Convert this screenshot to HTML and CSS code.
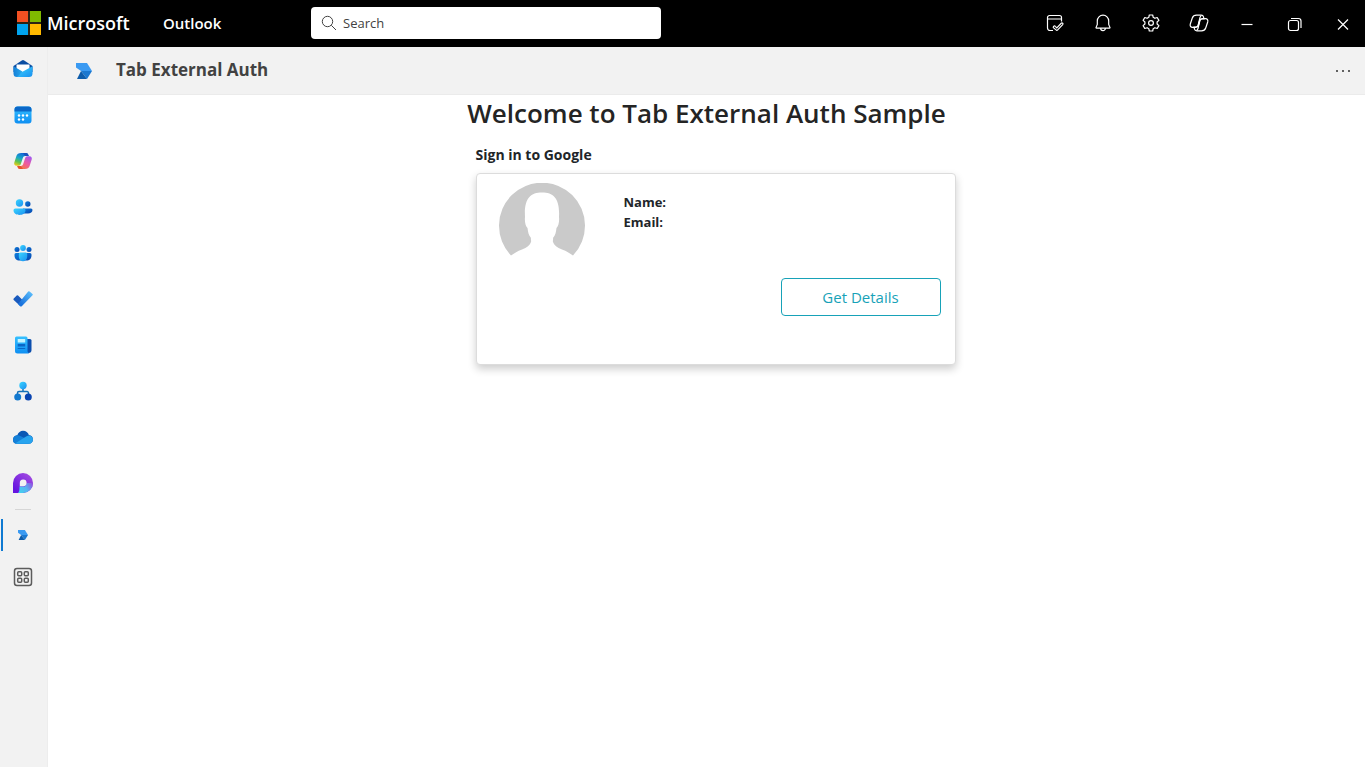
FILE: index.html
```html
<!DOCTYPE html>
<html lang="en">
<head>
<meta charset="utf-8">
<title>Tab External Auth - Outlook</title>
<link rel="stylesheet" href="styles.css">
</head>
<body>
<svg width="0" height="0" class="defs" aria-hidden="true">
  <defs>
    <linearGradient id="sky" x1="0" y1="0" x2="1" y2="1"><stop offset="0" stop-color="#3bd5ff"/><stop offset="1" stop-color="#1a90f0"/></linearGradient>
    <linearGradient id="deep" x1="0" y1="0" x2="1" y2="1"><stop offset="0" stop-color="#0f7fdc"/><stop offset="1" stop-color="#0544ae"/></linearGradient>
    <linearGradient id="day" x1="0" y1="0" x2="0" y2="1"><stop offset="0" stop-color="#35c0ff"/><stop offset="1" stop-color="#0f8ff2"/></linearGradient>
    <linearGradient id="env" x1="0" y1="0" x2="1" y2="0"><stop offset="0" stop-color="#1480d8"/><stop offset="1" stop-color="#35bdf5"/></linearGradient>
    <linearGradient id="tick" x1="0" y1="1" x2="1" y2="0"><stop offset="0.2" stop-color="#1a73dd"/><stop offset="1" stop-color="#62c5ff"/></linearGradient>
    <linearGradient id="cool" gradientUnits="userSpaceOnUse" x1="9" y1="2" x2="4" y2="15"><stop offset="0" stop-color="#1468d8"/><stop offset="0.4" stop-color="#18a8c8"/><stop offset="0.7" stop-color="#62c44c"/><stop offset="1" stop-color="#f5cc18"/></linearGradient>
    <linearGradient id="warm" gradientUnits="userSpaceOnUse" x1="16" y1="5" x2="8" y2="18"><stop offset="0" stop-color="#a357ee"/><stop offset="0.5" stop-color="#ee5aa0"/><stop offset="1" stop-color="#f47a3c"/></linearGradient>
    <linearGradient id="loop" x1="0.9" y1="0.1" x2="0.2" y2="0.9"><stop offset="0" stop-color="#a24be0"/><stop offset="1" stop-color="#6614e0"/></linearGradient>
    <linearGradient id="loopTail" gradientUnits="userSpaceOnUse" x1="6" y1="18" x2="19" y2="10"><stop offset="0" stop-color="#43d0f0"/><stop offset="0.5" stop-color="#58b4f0"/><stop offset="1" stop-color="#9250e0"/></linearGradient>
    <symbol id="app" viewBox="0 0 16 16">
      <path d="M0 0h11l5 8H5L0 4.500z" fill="#3a9af2"/><path d="M5 8h11l-5 8z" fill="#1b78d0"/><path d="M5 8l6 8H1z" fill="#0d5cab"/>
    </symbol>
  </defs>
</svg>

<header class="topbar">
  <a class="brand" href="#">
    <svg class="brand-mark" viewBox="0 0 24 24" aria-hidden="true"><path d="M0 0h24v24H0z" fill="#2c2413"/><path d="M0 0h11v11H0z" fill="#f25022"/><path d="M13 0h11v11H13z" fill="#7fba00"/><path d="M0 13h11v11H0z" fill="#00a4ef"/><path d="M13 13h11v11H13z" fill="#ffb900"/></svg>
    <span class="brand-name">Microsoft</span>
  </a>
  <a class="product" href="#">Outlook</a>
  <label class="search">
    <svg class="search-icon" viewBox="0 0 16 16" aria-hidden="true"><circle cx="6.500" cy="6.500" r="5.200"/><path d="M10.300 10.300L15 15"/></svg>
    <input type="search" placeholder="Search" aria-label="Search">
  </label>
  <div class="actions">
    <button type="button" aria-label="My Day"><svg viewBox="0 0 20 20"><path d="M8 17.500H5A2.500 2.500 0 0 1 2.500 15V4.500a2 2 0 0 1 2-2h10a2 2 0 0 1 2 2v4M2.500 6h14M8.600 13.300c.6-.6 1.200-.6 1.700 0l1.500 1.500 4.400-4.500c1-.9 2.400.4 1.500 1.400l-5 5.200c-.5.500-1.200.5-1.700 0L8.600 14.900c-.5-.5-.5-1.100 0-1.600z"/></svg></button>
    <button type="button" aria-label="Notifications"><svg viewBox="0 0 20 20"><path d="M10 2.200a5.700 5.700 0 0 0-5.700 5.700v3.600L3 14.600c-.1.300.1.500.4.500h13.200c.3 0 .5-.2.400-.5l-1.300-3.100V7.900A5.700 5.700 0 0 0 10 2.200zM7.600 15.200a2.400 2.400 0 0 0 4.800 0"/></svg></button>
    <button type="button" aria-label="Settings"><svg viewBox="0 0 20 20"><path d="M8.300 2h3.400l.5 2.300 1.700 1 2.300-.8 1.700 2.900-1.800 1.600v2l1.800 1.600-1.700 2.900-2.300-.8-1.700 1-.5 2.300H8.300l-.5-2.300-1.700-1-2.300.8-1.700-2.900L3.900 11V9L2.100 7.400l1.700-2.900 2.300.8 1.700-1z" stroke-linejoin="round"/><circle cx="10" cy="10" r="2.400"/></svg></button>
    <button type="button" aria-label="Copilot"><svg viewBox="0 0 20 20"><path id="half" d="M7.500 2.200H12.200c1.300 0 2 .6 2.300 1.700L15 6H13c-1.300 0-2 .7-2.400 2L9.200 12.400c-.4 1.300-1.200 1.900-2.600 1.900H3.500c-1.900 0-2.700-1.500-2.200-3.300L3.300 5C4 3 5.300 2.200 7.500 2.200z"/><use href="#half" transform="rotate(180 10 10)"/><path d="M12.500 2.500c-1 .3-1.200 1-1.500 2L9.200 12M7.500 17.500c1-.3 1.200-1 1.500-2L10.800 8"/></svg></button>
    <button type="button" class="window" aria-label="Minimize"><svg viewBox="0 0 20 20"><path d="M4.500 10.500h11"/></svg></button>
    <button type="button" class="window" aria-label="Restore"><svg viewBox="0 0 20 20"><rect x="3.500" y="6.500" width="10" height="10" rx="2"/><path d="M6 4.500h7.500A2.500 2.500 0 0 1 16 7v7"/></svg></button>
    <button type="button" class="window" aria-label="Close"><svg viewBox="0 0 20 20"><path d="M5 5.500l10 10M15 5.500l-10 10"/></svg></button>
  </div>
</header>

<div class="shell">
  <nav class="rail" aria-label="Apps">
    <a href="#" aria-label="Mail"><svg viewBox="0 0 20 20"><path d="M.5 7L8.800 1.500a2 2 0 0 1 2.400 0L19.500 7v6H.5z" fill="#0b4ea3"/><path d="M3.500 5.500h13V14h-13z" fill="#fff"/><path d="M.5 7.200l8.500 5L14 18H4a3.500 3.500 0 0 1-3.500-3.500z" fill="url(#env)"/><path d="M19.500 7.200v7.300A3.500 3.500 0 0 1 16 18H4c2-1 3-3.500 5-5z" fill="url(#sky)"/></svg></a>
    <a href="#" aria-label="Calendar"><svg viewBox="0 0 20 20"><rect x="1.500" y="1.500" width="17" height="17" rx="3" fill="url(#day)"/><path d="M1.500 6.500v-2a3 3 0 0 1 3-3h11a3 3 0 0 1 3 3v2z" fill="#0b68c8"/><g fill="#fff"><circle cx="6" cy="10.500" r="1.200"/><circle cx="10" cy="10.500" r="1.200"/><circle cx="14" cy="10.500" r="1.200"/><circle cx="6" cy="14.500" r="1.200"/><circle cx="10" cy="14.500" r="1.200"/></g></svg></a>
    <a href="#" aria-label="Copilot"><svg viewBox="0 0 20 20"><path d="M8.200 2H13c1.300 0 2 .8 2.400 2l.3 1h-3.500c-1.300 0-2 .7-2.400 2L8 12.500c-.5 1.500-1.200 2.200-2.500 2.200h-2c-1.900 0-2.700-1.500-2.200-3.300L3.400 5C4 3 5.500 2 8.200 2z" fill="url(#cool)"/><path d="M11.800 18H7c-1.300 0-2-.8-2.400-2l-.3-1h3.500c1.300 0 2-.7 2.400-2L12 7.500c.5-1.500 1.200-2.200 2.500-2.200h2c1.900 0 2.700 1.500 2.200 3.300L16.600 15c-.6 2-2.100 3-4.800 3z" fill="url(#warm)"/><path d="M10 2h3c1.300 0 2 .8 2.400 2l.3 1h-3.500z" fill="#1a52bd"/><path d="M10 18H7c-1.300 0-2-.8-2.400-2l-.3-1h3.500z" fill="#e6532e"/></svg></a>
    <a href="#" aria-label="People"><svg viewBox="0 0 20 20"><circle cx="14.800" cy="7" r="2.700" fill="url(#deep)"/><path d="M10 11.500h8a1.500 1.500 0 0 1 1.500 1.500c0 2.300-2 3.500-4.500 3.500h-5z" fill="url(#deep)"/><circle cx="6.500" cy="6" r="3.700" fill="url(#sky)"/><path d="M2.300 11.500h8.400a1.800 1.800 0 0 1 1.800 1.800c0 3-2.700 4.700-6 4.700s-6-1.700-6-4.700a1.800 1.800 0 0 1 1.800-1.800z" fill="url(#sky)"/></svg></a>
    <a href="#" aria-label="Groups"><svg viewBox="0 0 20 20"><circle cx="4" cy="6.500" r="2.500" fill="url(#deep)"/><circle cx="16" cy="6.500" r="2.500" fill="url(#deep)"/><path d="M3 10h14a1.500 1.500 0 0 1 1.500 1.500v1c0 3-2 5-5 5h-7c-3 0-5-2-5-5v-1A1.500 1.500 0 0 1 3 10z" fill="url(#deep)"/><circle cx="10" cy="5" r="2.900" fill="url(#sky)"/><path d="M7.300 9.500h5.400a1.500 1.500 0 0 1 1.500 1.500v3a4.200 4.200 0 0 1-8.400 0v-3a1.500 1.500 0 0 1 1.500-1.500z" fill="url(#sky)"/></svg></a>
    <a href="#" aria-label="To Do"><svg viewBox="0 0 20 20"><path d="M.7 9.600l3-3a1 1 0 0 1 1.400 0l5.900 5.900-3.200 3.700a1 1 0 0 1-1.400 0L.7 11a1 1 0 0 1 0-1.400z" fill="#195abd"/><path d="M5 15L15.200 2.500a1 1 0 0 1 1.400 0l2.900 2.400a1 1 0 0 1 0 1.400L9 17a1.500 1.500 0 0 1-2.200 0z" fill="url(#tick)"/></svg></a>
    <a href="#" aria-label="News"><svg viewBox="0 0 20 20"><path d="M12 4h5a1.500 1.500 0 0 1 1.500 1.500v9.500a3 3 0 0 1-3 3H12z" fill="#0c4fae"/><path d="M3.500 1.500h9.500A1.500 1.500 0 0 1 14.500 3v13.500l1.500 2H4.500A2.500 2.500 0 0 1 2 16V3a1.500 1.500 0 0 1 1.500-1.500z" fill="url(#day)"/><path d="M4.700 4h7.500v3.500H4.700z" fill="#c5f4ff"/><path d="M4.700 9h7.500v2.500H4.700zM4.700 13h7.500v1H4.700z" fill="#0b67c6"/></svg></a>
    <a href="#" aria-label="Org Explorer"><svg viewBox="0 0 20 20"><path d="M10 6v4M4.500 14v-2A1.500 1.500 0 0 1 6 10.500h8a1.500 1.500 0 0 1 1.500 1.500v2" fill="none" stroke="#1571b8" stroke-width="1.500"/><circle cx="10" cy="4.500" r="3.700" fill="url(#sky)"/><circle cx="4.700" cy="16" r="3.500" fill="#1379cf"/><circle cx="15.300" cy="16" r="3.500" fill="#0944b1"/></svg></a>
    <a href="#" aria-label="OneDrive"><svg viewBox="0 0 20 20"><path d="M4 16.700a4 4 0 0 1-4-4c0-2.500 1.800-4.200 4.300-4.400C5.300 5.200 7.500 3.700 10 3.700c3 0 5 1.800 5.900 4.400 2.400.2 4.100 2 4.100 4.300 0 2.500-1.800 4.300-4.200 4.300z" fill="#0a58b5"/><path d="M4 16.700a4 4 0 0 1-4-4c0-3.200 3.500-5.300 6.700-3.900L18 14l-3 2.700z" fill="#1480d8"/><path d="M2.400 16.300L13.500 9.200c3.300-2 6.500.4 6.500 3.400a4.100 4.100 0 0 1-4.200 4.100H4c-.6 0-1.100-.1-1.600-.4z" fill="#28a4ee"/></svg></a>
    <a href="#" aria-label="Loop"><svg viewBox="0 0 20 20"><path d="M0 20V10A10 10 0 1 1 10 20z" fill="url(#loop)"/><path d="M5 20c1.300-1 1.500-3 1.500-6.500H12l2-3.500 6 0A10 10 0 0 1 10 20z" fill="url(#loopTail)"/><path d="M6.800 13.300V10a3.400 3.400 0 1 1 3.400 3.300z" fill="#f2f2f2"/></svg></a>
    <hr>
    <a href="#" class="current" aria-label="Tab External Auth" aria-current="page"><svg viewBox="0 0 16 16"><use href="#app"/></svg></a>
    <a href="#" class="more" aria-label="More apps"><svg viewBox="0 0 20 20" fill="none" stroke="#5c5c5c" stroke-width="1.500"><rect x="1.500" y="1.500" width="17" height="17" rx="2.500"/><rect x="4.700" y="4.700" width="4" height="4" rx="1"/><rect x="11.300" y="4.700" width="4" height="4" rx="1"/><rect x="4.700" y="11.300" width="4" height="4" rx="1"/><rect x="11.300" y="11.300" width="4" height="4" rx="1"/></svg></a>
  </nav>

  <div class="workspace">
    <div class="app-header">
      <svg class="app-logo" viewBox="0 0 16 16" aria-hidden="true"><use href="#app"/></svg>
      <h2 class="app-title">Tab External Auth</h2>
      <button type="button" class="overflow" aria-label="More options"><svg viewBox="0 0 16 16"><path d="M1 7h2v2H1zM7 7h2v2H7zM13 7h2v2h-2z"/></svg></button>
    </div>
    <main class="content">
      <h1>Welcome to Tab External Auth Sample</h1>
      <section class="sign-in">
        <h3>Sign in to Google</h3>
        <div class="card">
          <svg class="avatar" viewBox="0 0 86 73" role="img" aria-label="Profile picture"><path d="M12 72.500A43 43 0 1 1 74 72.500C70 70 68 68 63 66.500c-5-2-8-4-9-7.500-.5-2 .5-2 0-4 2.500-3 3-6 3.500-10 2-2 3-7 2.500-11C61 16 55 9.500 43 9.500S25 16 26 34c-.5 4 .5 9 2.500 11 .5 4 1 7 3.500 10-.5 2 .5 2 0 4-1 3.500-4 5.500-9 7.500-5 1.500-7 3.500-11 6z" fill="#cacaca"/></svg>
          <div class="details">
            <dl>
              <dt>Name:</dt>
              <dt>Email:</dt>
            </dl>
            <button type="button" class="get-details">Get Details</button>
          </div>
        </div>
      </section>
    </main>
  </div>
</div>
</body>
</html>
```

FILE: styles.css
```css
* {
  box-sizing: border-box;
}

body {
  margin: 0;
  min-height: 100vh;
  display: flex;
  flex-direction: column;
  background: #fff;
  color: #212529;
  font-family: "Open Sans", "Noto Sans", sans-serif;
}

a {
  color: inherit;
  text-decoration: none;
}

button {
  font: inherit;
  cursor: pointer;
}

.defs {
  position: absolute;
}

.topbar {
  display: flex;
  align-items: center;
  height: 47px;
  padding: 0 0 2px 17px;
  background: #000;
  color: #fff;
}

.brand {
  display: flex;
  align-items: center;
  gap: 6px;
  width: 146px;
}

.brand-mark {
  width: 24px;
  height: 24px;
}

.brand-name {
  font-size: 18px;
  font-weight: 600;
  line-height: 24px;
}

.product {
  width: 148px;
  font-size: 15px;
  font-weight: 600;
}

.search {
  display: flex;
  align-items: center;
  gap: 6px;
  width: 350px;
  height: 32px;
  padding: 0 10px;
  border-radius: 4px;
  background: #fff;
}

.search-icon {
  width: 16px;
  height: 16px;
  fill: none;
  stroke: #424242;
}

.search input {
  flex: 1;
  min-width: 0;
  padding: 0;
  border: 0;
  outline: 0;
  background: none;
  font: 13px "Open Sans", "Noto Sans", sans-serif;
}

.search input::placeholder {
  color: #424242;
}

.actions {
  display: flex;
  margin: 0 -2px 0 auto;
}

.actions button {
  display: grid;
  place-items: center;
  width: 48px;
  height: 45px;
  padding: 0;
  border: 0;
  background: none;
}

.actions .window {
  padding-top: 3px;
}

.actions svg {
  width: 20px;
  height: 20px;
  fill: none;
  stroke: #fff;
  stroke-width: 1.2;
}

.shell {
  flex: 1;
  display: flex;
}

.rail {
  display: flex;
  flex-direction: column;
  gap: 2px;
  width: 48px;
  border-right: 1px solid #ededed;
  background: #f2f2f2;
}

.rail a {
  display: grid;
  place-items: center;
  height: 44px;
  padding-right: 1px;
}

.rail svg {
  width: 20px;
  height: 20px;
}

.rail hr {
  width: 16px;
  margin: 2px 0 7px 15px;
  border: 0;
  border-top: 1px solid #d6d6d6;
}

.rail .current {
  height: 32px;
  margin-left: 1px;
  padding-right: 5px;
  border-left: 2px solid #0f7ad2;
}

.rail .current svg {
  width: 10px;
  height: 10px;
}

.rail .more {
  height: 48px;
}

.workspace {
  flex: 1;
  min-width: 0;
}

.app-header {
  display: flex;
  align-items: center;
  height: 48px;
  padding: 0 14px 0 28px;
  border-bottom: 1px solid #ebebeb;
  background: #f2f2f2;
}

.app-logo {
  width: 16px;
  height: 16px;
}

.app-title {
  flex: 1;
  margin: 0 0 2px 24px;
  color: #424242;
  font-size: 17px;
  font-weight: 700;
}

.overflow {
  display: grid;
  padding: 0;
  border: 0;
  background: none;
}

.overflow svg {
  width: 16px;
  height: 16px;
  fill: #616161;
}

.content {
  max-width: 502px;
  margin: 0 auto;
}

h1 {
  margin: 0;
  color: #242424;
  font-size: 26px;
  font-weight: 600;
  line-height: 36px;
  text-align: center;
  white-space: nowrap;
}

.sign-in {
  padding: 14px 2px 0 20px;
}

.sign-in h3 {
  margin: 0 0 8px;
  font-size: 14px;
  font-weight: 700;
  line-height: 20px;
}

.card {
  display: flex;
  height: 192px;
  padding: 9px 14px 0 22px;
  border: 1px solid #dcdcdc;
  border-radius: 4px;
  background: #fff;
  box-shadow: 0 4px 8px rgba(0, 0, 0, 0.2);
}

.avatar {
  width: 86px;
  height: 73px;
}

.details {
  flex: 1;
  display: flex;
  flex-direction: column;
  margin-left: 39px;
}

.details dl {
  margin: 9px 0 46px;
  font-size: 13px;
  font-weight: 700;
  line-height: 20px;
}

.get-details {
  align-self: flex-end;
  width: 160px;
  height: 38px;
  border: 1px solid #17a2b8;
  border-radius: 4px;
  background: #fff;
  color: #17a2b8;
  font-size: 15px;
}
```
